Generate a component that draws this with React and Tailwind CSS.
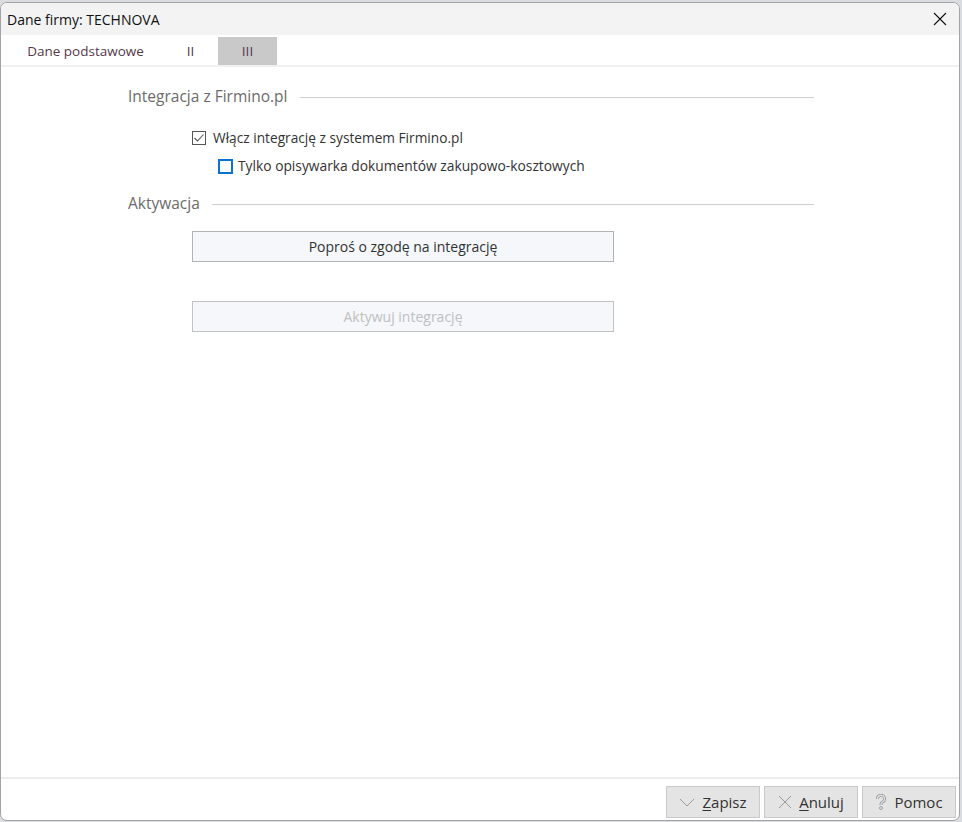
import React from 'react';

const font = { fontFamily: '"Open Sans", "Noto Sans", sans-serif' };

function SectionTitle({ children }) {
  return (
    <div className="flex items-center h-[20px]">
      <span className="text-[15.5px] text-[#6b6b6b] leading-none">{children}</span>
      <div className="flex-1 h-px bg-[#cfcfcf] ml-[12px]" />
    </div>
  );
}

function FooterButton({ icon, label, hotkey }) {
  return (
    <button className="w-[94px] h-[32px] bg-[#e4e4e4] border border-[#c9c9c9] flex items-center justify-center gap-[7px] text-[15px] text-[#333333]">
      {icon}
      <span>
        {hotkey ? <span className="underline underline-offset-2">{label[0]}</span> : label[0]}
        {label.slice(1)}
      </span>
    </button>
  );
}

export default function App() {
  return (
    <div className="w-[962px] h-[822px] bg-[#d9dde2] pt-[2px] overflow-hidden" style={font}>
      <div className="w-[960px] h-[819px] border border-[#a3a3a3] rounded-[7px] bg-white flex flex-col overflow-hidden">
        <div className="h-[32px] bg-[#f3f3f3] flex items-center justify-between pl-[6px] pr-[12px] shrink-0">
          <span className="text-[14px] text-[#111111]">Dane firmy: TECHNOVA</span>
          <svg width="14" height="14" viewBox="0 0 14 14" fill="none" stroke="#111" strokeWidth="1.1">
            <path d="M1 1 L13 13 M13 1 L1 13" />
          </svg>
        </div>

        <div className="h-[32px] bg-white border-b-2 border-[#f0f0f0] flex items-end pl-[7px] shrink-0">
          <div className="w-[155px] h-[28px] flex items-center justify-center text-[13.5px] font-medium text-[#553a4a]">Dane podstawowe</div>
          <div className="w-[55px] h-[28px] flex items-center justify-center text-[13.5px] font-medium text-[#553a4a]">II</div>
          <div className="w-[59px] h-[28px] flex items-center justify-center text-[13.5px] font-medium text-[#553a4a] bg-[#c9c9c9]">III</div>
        </div>

        <div className="flex-1 pl-[127px] pr-[145px] pt-[20px]">
          <SectionTitle>Integracja z Firmino.pl</SectionTitle>

          <div className="mt-[21px] ml-[64px] h-[20px] flex items-center gap-[7px]">
            <div className="w-[14px] h-[14px] border border-[#555555] flex items-center justify-center">
              <svg width="12" height="12" viewBox="0 0 12 12" fill="none" stroke="#555" strokeWidth="1.1">
                <path d="M1.5 6 L4.5 9 L10.5 2.5" />
              </svg>
            </div>
            <span className="text-[13.7px] text-[#333333]">Włącz integrację z systemem Firmino.pl</span>
          </div>

          <div className="mt-[8px] ml-[90px] h-[20px] flex items-center gap-[5px]">
            <div className="w-[15px] h-[15px] border-2 border-[#0a72d1]" />
            <span className="text-[13.8px] text-[#333333]">Tylko opisywarka dokumentów zakupowo-kosztowych</span>
          </div>

          <div className="mt-[18px]">
            <SectionTitle>Aktywacja</SectionTitle>
          </div>

          <div className="ml-[64px] w-[422px]">
            <button className="mt-[17px] w-full h-[31px] bg-[#f5f7fa] border border-[#b3b3b3] text-[14px] text-[#333333]">
              Poproś o zgodę na integrację
            </button>
            <button className="mt-[39px] w-full h-[31px] bg-[#f5f7fa] border border-[#c2c2c2] text-[14px] text-[#c0c0c0]">
              Aktywuj integrację
            </button>
          </div>
        </div>

        <div className="h-[43px] border-t-2 border-[#ececec] flex justify-end items-start gap-[4px] pt-[7px] pr-[3px] shrink-0">
          <FooterButton
            hotkey
            label="Zapisz"
            icon={
              <svg width="16" height="10" viewBox="0 0 16 10" fill="none" stroke="#9a9a9a" strokeWidth="1">
                <path d="M1 2 L8 9 L15 2" />
              </svg>
            }
          />
          <FooterButton
            hotkey
            label="Anuluj"
            icon={
              <svg width="14" height="14" viewBox="0 0 14 14" fill="none" stroke="#9a9a9a" strokeWidth="1">
                <path d="M1 1 L13 13 M13 1 L1 13" />
              </svg>
            }
          />
          <FooterButton
            label="Pomoc"
            icon={
              <svg width="12" height="16" viewBox="0 0 12 16" fill="none">
                <path d="M2.5 5 A3.5 3.5 0 1 1 7.5 8 Q6 8.8 6 10.5 V11" stroke="#9a9a9a" strokeWidth="3" />
                <path d="M2.5 5 A3.5 3.5 0 1 1 7.5 8 Q6 8.8 6 10.5 V11" stroke="#e4e4e4" strokeWidth="1.2" />
                <circle cx="6" cy="14" r="1.5" stroke="#9a9a9a" strokeWidth="0.9" fill="#e4e4e4" />
              </svg>
            }
          />
        </div>
      </div>
    </div>
  );
}
